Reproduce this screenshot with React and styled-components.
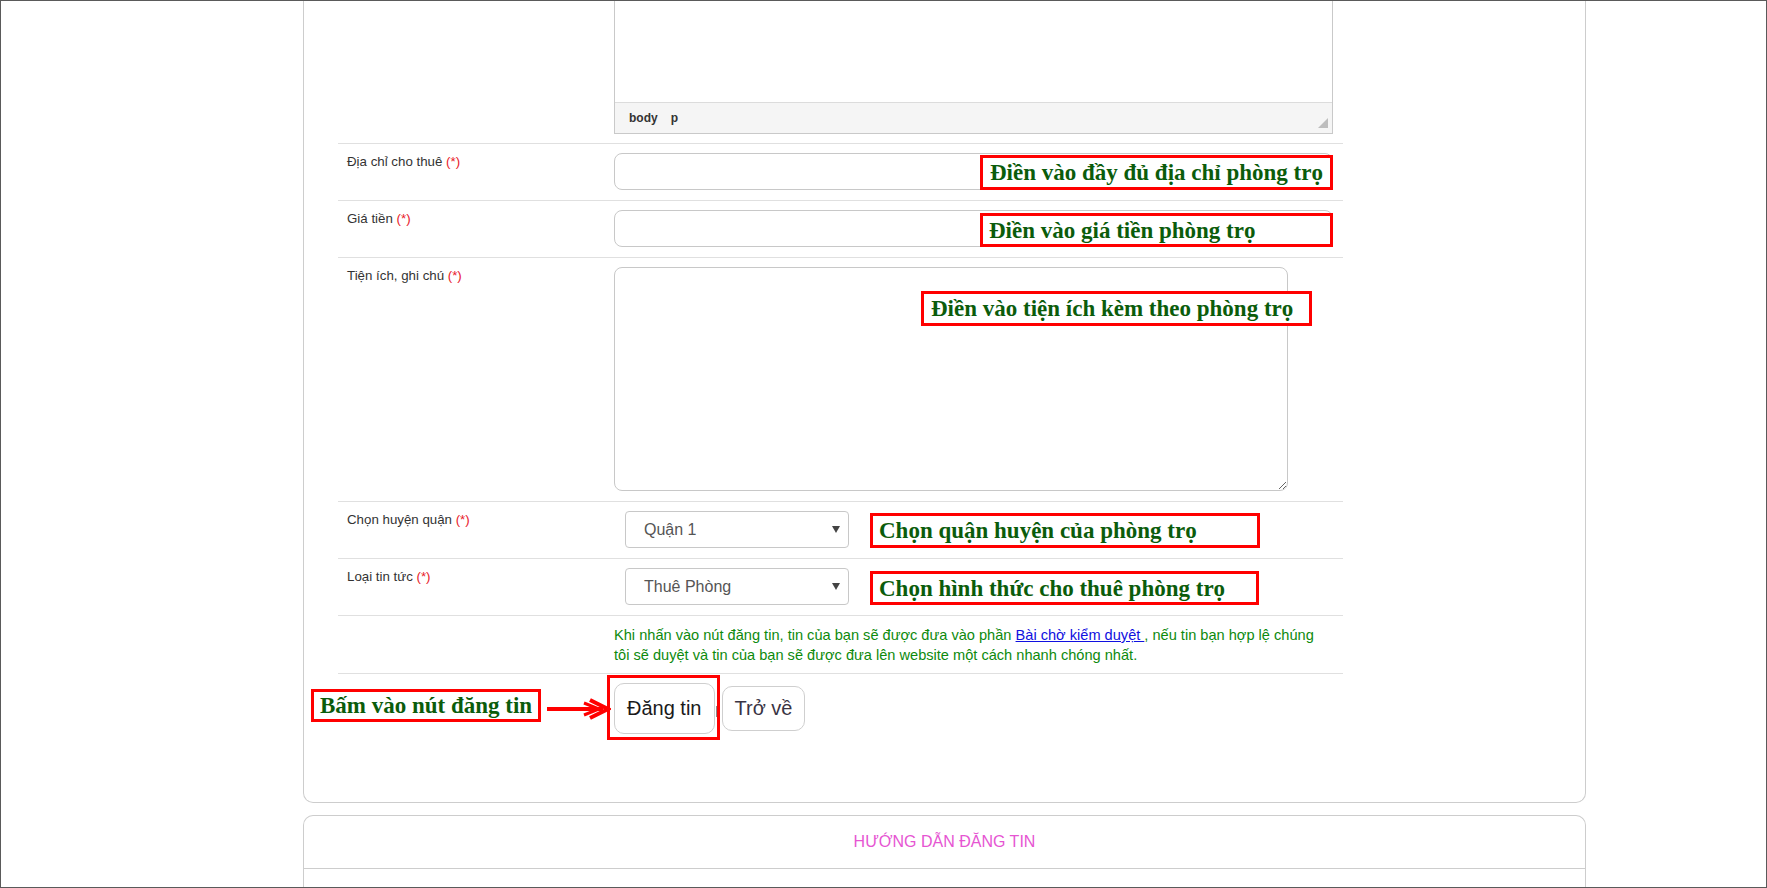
import React from "react";
import styled, { createGlobalStyle } from "styled-components";

const GlobalStyle = createGlobalStyle`
  html, body {
    margin: 0;
    padding: 0;
    background: #fff;
  }
  body {
    font-family: "Liberation Sans", Arial, sans-serif;
  }
`;

const App = () => {
  return (
    <>
      <GlobalStyle />
      <Frame>
        <Card>
          <Form>
            <Row $first $pad="0 10px 9px 0">
              <span />
              <Editor>
                <EditorBody />
                <StatusBar>
                  <PathItem>body</PathItem>
                  <PathItem>p</PathItem>
                  <Grip width="10" height="10" viewBox="0 0 10 10">
                    <polygon points="10,0 10,10 0,10" fill="#bdbdbd" />
                  </Grip>
                </StatusBar>
              </Editor>
            </Row>

            <Row>
              <Label>
                Địa chỉ cho thuê <Req>(*)</Req>
              </Label>
              <TextInput type="text" />
              <Callout $left={642} $top={11} $w={353} $h={35} $pad={7}>
                Điền vào đầy đủ địa chỉ phòng trọ
              </Callout>
            </Row>

            <Row>
              <Label>
                Giá tiền <Req>(*)</Req>
              </Label>
              <TextInput type="text" />
              <Callout $left={642} $top={12} $w={353} $h={34} $pad={6}>
                Điền vào giá tiền phòng trọ
              </Callout>
            </Row>

            <Row>
              <Label>
                Tiện ích, ghi chú <Req>(*)</Req>
              </Label>
              <NoteArea />
              <Callout $left={583} $top={33} $w={391} $h={35} $pad={7}>
                Điền vào tiện ích kèm theo phòng trọ
              </Callout>
            </Row>

            <Row>
              <Label>
                Chọn huyện quận <Req>(*)</Req>
              </Label>
              <SelectBox>
                <span>Quận 1</span>
                <Caret />
              </SelectBox>
              <Callout $left={532} $top={11} $w={390} $h={35} $pad={6}>
                Chọn quận huyện của phòng trọ
              </Callout>
            </Row>

            <Row>
              <Label>
                Loại tin tức <Req>(*)</Req>
              </Label>
              <SelectBox>
                <span>Thuê Phòng</span>
                <Caret />
              </SelectBox>
              <Callout $left={532} $top={12} $w={389} $h={34} $pad={6}>
                Chọn hình thức cho thuê phòng trọ
              </Callout>
            </Row>

            <Row $pad="9px 10px 8px 0">
              <span />
              <Notice>
                Khi nhấn vào nút đăng tin, tin của bạn sẽ được đưa vào phần{" "}
                <NoticeLink href="#">Bài chờ kiểm duyệt </NoticeLink>, nếu tin
                bạn hợp lệ chúng tôi sẽ duyệt và tin của bạn sẽ được đưa lên
                website một cách nhanh chóng nhất.
              </Notice>
            </Row>

            <Row $pad="9px 10px 0 0">
              <span />
              <Actions>
                <Button $h={51}>Đăng tin</Button>
                <Sep />
                <Button $h={45} $color="#3a3444">
                  Trở về
                </Button>
              </Actions>
              <Callout $left={-27} $top={15} $w={230} $h={33} $pad={6}>
                Bấm vào nút đăng tin
              </Callout>
              <Arrow width="64" height="24" viewBox="0 0 64 24">
                <line x1="0" y1="12" x2="56" y2="12" stroke="#ff0000" strokeWidth="4" />
                <polyline points="43,3 61,12 43,21" fill="none" stroke="#ff0000" strokeWidth="4" />
                <polyline points="37,6 52,12 37,18" fill="none" stroke="#ff0000" strokeWidth="3" />
              </Arrow>
              <Callout $left={269} $top={1} $w={113} $h={65} $clear />
            </Row>
          </Form>
        </Card>

        <GuideCard>
          <GuideHeader>HƯỚNG DẪN ĐĂNG TIN</GuideHeader>
          <GuideBody />
        </GuideCard>
      </Frame>
    </>
  );
};

const Caret = () => (
  <svg width="8" height="7" viewBox="0 0 8 7">
    <polygon points="0,0 8,0 4,7" fill="#444" />
  </svg>
);

export default App;

const Frame = styled.div`
  height: 888px;
  box-sizing: border-box;
  border: 1px solid #5a5a5a;
  overflow: hidden;
  padding-left: 302px;
  display: flex;
  flex-direction: column;
  gap: 12px;
`;

const Card = styled.div`
  width: 1283px;
  box-sizing: border-box;
  border: 1px solid #cdcdcd;
  border-top: none;
  border-radius: 0 0 10px 10px;
  padding: 0 0 68px 34px;
  flex-shrink: 0;
`;

const Form = styled.div`
  width: 1005px;
`;

const Row = styled.div`
  position: relative;
  display: grid;
  grid-template-columns: 276px 1fr;
  align-items: start;
  padding: ${(p) => p.$pad || "9px 10px 10px 0"};
  border-top: ${(p) => (p.$first ? "none" : "1px solid #e0e0e0")};
`;

const Label = styled.div`
  padding: 1px 0 0 9px;
  font-size: 13.3px;
  line-height: 16px;
  color: #333;
`;

const Req = styled.span`
  color: #e8202a;
`;

const Editor = styled.div`
  width: 719px;
  box-sizing: border-box;
  border: 1px solid #c9c9c9;
  border-top: none;
`;

const EditorBody = styled.div`
  height: 101px;
  background: #fff;
`;

const StatusBar = styled.div`
  height: 29px;
  border-top: 1px solid #dcdcdc;
  background: #f5f5f5;
  display: flex;
  align-items: center;
  padding: 0 4px 1px 14px;
  font-size: 12px;
  font-weight: bold;
  color: #333;
`;

const PathItem = styled.span`
  margin-right: 13px;
`;

const Grip = styled.svg`
  margin-left: auto;
  align-self: flex-end;
  margin-bottom: 4px;
`;

const TextInput = styled.input`
  width: 719px;
  height: 37px;
  box-sizing: border-box;
  border: 1px solid #c8c8c8;
  border-radius: 8px;
  padding: 0 10px;
  font: 14px "Liberation Sans", Arial, sans-serif;
  outline: none;
`;

const NoteArea = styled.textarea`
  display: block;
  width: 674px;
  height: 224px;
  box-sizing: border-box;
  border: 1px solid #c8c8c8;
  border-radius: 8px;
  resize: both;
  outline: none;
  font: 14px "Liberation Sans", Arial, sans-serif;
`;

const SelectBox = styled.div`
  margin-left: 11px;
  width: 224px;
  height: 37px;
  box-sizing: border-box;
  border: 1px solid #c8c8c8;
  border-radius: 4px;
  display: flex;
  align-items: center;
  justify-content: space-between;
  padding: 0 8px 0 18px;
  font-size: 16px;
  color: #555;
`;

const Notice = styled.p`
  margin: 0;
  max-width: 712px;
  font-size: 14.6px;
  line-height: 20px;
  color: #0d8a0d;
`;

const NoticeLink = styled.a`
  color: #1010e0;
  text-decoration: underline;
`;

const Actions = styled.div`
  display: flex;
  align-items: center;
`;

const Button = styled.button`
  height: ${(p) => p.$h}px;
  padding: 0 12px;
  background: #fff;
  border: 1px solid #cfcfcf;
  border-radius: 10px;
  font: 20px "Liberation Sans", Arial, sans-serif;
  color: ${(p) => p.$color || "#1a1a1a"};
  cursor: pointer;
`;

const Sep = styled.span`
  width: 2px;
  height: 11px;
  margin: 6px 4px 0 1px;
  background: #8a8a8a;
`;

const Callout = styled.div`
  position: absolute;
  left: ${(p) => p.$left}px;
  top: ${(p) => p.$top}px;
  width: ${(p) => p.$w}px;
  height: ${(p) => p.$h}px;
  box-sizing: border-box;
  border: 3px solid #ff0000;
  background: ${(p) => (p.$clear ? "transparent" : "#fff")};
  display: flex;
  align-items: center;
  padding-left: ${(p) => p.$pad || 0}px;
  font: bold 23px "Liberation Serif", "Times New Roman", serif;
  line-height: 1;
  color: #0b5c0b;
  white-space: nowrap;
  pointer-events: none;
`;

const Arrow = styled.svg`
  position: absolute;
  left: 209px;
  top: 23px;
`;

const GuideCard = styled.div`
  width: 1283px;
  box-sizing: border-box;
  border: 1px solid #cdcdcd;
  border-bottom: none;
  border-radius: 10px 10px 0 0;
  flex-shrink: 0;
`;

const GuideHeader = styled.div`
  height: 53px;
  padding-bottom: 1px;
  box-sizing: border-box;
  border-bottom: 1px solid #cdcdcd;
  display: flex;
  align-items: center;
  justify-content: center;
  font-size: 16px;
  color: #e655d2;
`;

const GuideBody = styled.div`
  height: 60px;
`;
